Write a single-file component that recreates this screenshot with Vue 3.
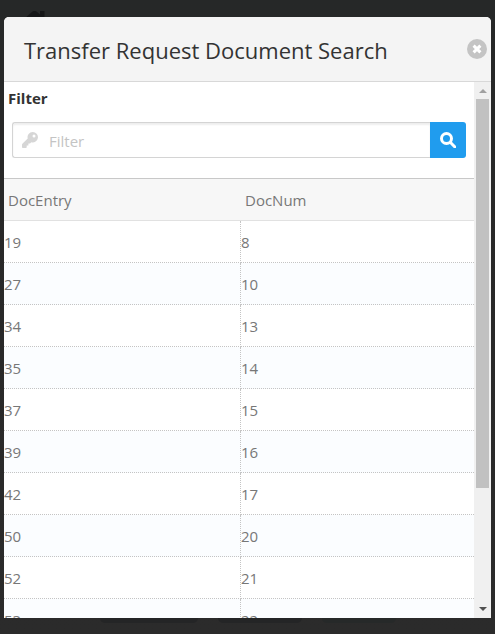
<script setup>
import { ref } from 'vue'

const filter = ref('')
const rows = [
  { docEntry: 19, docNum: 8 },
  { docEntry: 27, docNum: 10 },
  { docEntry: 34, docNum: 13 },
  { docEntry: 35, docNum: 14 },
  { docEntry: 37, docNum: 15 },
  { docEntry: 39, docNum: 16 },
  { docEntry: 42, docNum: 17 },
  { docEntry: 50, docNum: 20 },
  { docEntry: 52, docNum: 21 },
  { docEntry: 53, docNum: 22 },
]
</script>

<template>
  <div class="page">
    <svg class="home" viewBox="0 0 24 18" aria-hidden="true">
      <path d="M0 8 L8.500 0.600 Q10.500 -0.800 12.500 0.600 L16 3.500 V0 H20.500 V7 L24 11 H20 V18 H4 V8 Z" />
    </svg>
    <div class="footer-shapes" aria-hidden="true"><i></i><i></i><i></i></div>
    <section class="dialog" role="dialog" aria-labelledby="dialog-title">
      <header class="head">
        <h1 id="dialog-title">Transfer Request Document Search</h1>
        <button class="close" type="button" aria-label="Close">
          <svg viewBox="0 0 20 20"><path d="M6.600 6.600 L13.400 13.400 M13.400 6.600 L6.600 13.400" /></svg>
        </button>
      </header>
      <div class="body">
        <div class="content">
          <form class="filter" @submit.prevent>
            <label for="filter">Filter</label>
            <div class="group">
              <div class="field">
                <svg class="key" viewBox="0 0 16 16" aria-hidden="true">
                  <path fill-rule="evenodd" d="M10.700 0 A5.200 5.200 0 1 1 9.300 10.200 L8 11.600 H6.400 V13.400 H4.700 V15.200 Q4.700 16 3.900 16 H0.800 Q0 16 0 15.200 V12.600 Q0 12.100 0.400 11.700 L5.700 6.500 A5.200 5.200 0 0 1 10.700 0 Z M12 2.500 A1.500 1.500 0 1 0 12 5.500 A1.500 1.500 0 1 0 12 2.500 Z" />
                </svg>
                <input id="filter" v-model="filter" type="text" placeholder="Filter" />
              </div>
              <button class="search" type="submit" aria-label="Search">
                <svg viewBox="0 0 16 16"><circle cx="6.500" cy="6.500" r="5" /><path d="M10.500 10.500 L15 15" /></svg>
              </button>
            </div>
          </form>
          <table>
            <thead>
              <tr><th scope="col">DocEntry</th><th scope="col">DocNum</th></tr>
            </thead>
            <tbody>
              <tr v-for="row in rows" :key="row.docEntry">
                <td>{{ row.docEntry }}</td>
                <td>{{ row.docNum }}</td>
              </tr>
            </tbody>
          </table>
        </div>
        <div class="scrollbar" aria-hidden="true">
          <svg class="arrow up" viewBox="0 0 17 17"><path d="M5 11 L9 7 L13 11 Z" /></svg>
          <div class="track"><div class="thumb"></div></div>
          <svg class="arrow down" viewBox="0 0 17 17"><path d="M5 6 L9 10 L13 6 Z" /></svg>
        </div>
      </div>
    </section>
  </div>
</template>

<style>
body {
  background: #27292a;
}
</style>

<style scoped>
* {
  box-sizing: border-box;
}
.page {
  position: relative;
  display: flex;
  height: 100vh;
  padding: 17px 4px 16px;
  overflow: hidden;
  background: linear-gradient(#262828, #282828 30%, #2b2b2b);
  font-family: "Segoe UI", "Open Sans", "Noto Sans", sans-serif;
  font-size: 15px;
  color: #777;
}
.home {
  position: absolute;
  top: 11px;
  left: 24px;
  width: 24px;
  height: 18px;
  fill: #151617;
}
.footer-shapes {
  position: absolute;
  bottom: 11px;
  left: 100px;
  display: flex;
  gap: 20px;
}
.footer-shapes i {
  width: 98px;
  height: 6px;
  border-radius: 0 0 5px 5px;
  background: #242526;
}
.footer-shapes i:nth-child(2) {
  width: 84px;
}
.footer-shapes i:nth-child(3) {
  width: 74px;
  background: #262929;
}
.dialog {
  position: relative;
  display: flex;
  flex: 1;
  flex-direction: column;
  min-width: 0;
  overflow: hidden;
  border-radius: 5px 5px 0 0;
  background: #fff;
}
.head {
  display: flex;
  flex: none;
  align-items: center;
  justify-content: space-between;
  height: 65px;
  padding: 0 4px 0 20px;
  border-bottom: 1px solid #d8d8d8;
  background: #f4f4f4;
}
h1 {
  margin: 0;
  padding-top: 2px;
  color: #333;
  font-size: 22px;
  font-weight: 400;
  line-height: 32px;
  white-space: nowrap;
}
.close {
  display: flex;
  width: 20px;
  height: 20px;
  padding: 0;
  border: 0;
  border-radius: 50%;
  background: #c4c4c4;
}
.close svg {
  width: 20px;
  height: 20px;
  fill: none;
  stroke: #fff;
  stroke-width: 3;
}
.body {
  display: flex;
  flex: 1;
  min-height: 0;
}
.content {
  flex: 1;
  min-width: 0;
  overflow: hidden;
}
.filter {
  padding: 5px 8px 20px;
}
label {
  display: block;
  margin: 0 0 13px -4px;
  color: #333;
  font-weight: 700;
  line-height: 22px;
}
.group {
  display: flex;
  height: 36px;
}
.field {
  display: flex;
  flex: 1;
  align-items: center;
  gap: 11px;
  min-width: 0;
  padding-left: 9px;
  border: 1px solid #d4d4d4;
  border-right: 0;
  border-radius: 3px 0 0 3px;
  box-shadow: inset 0 2px 2px #eee;
}
.key {
  flex: none;
  width: 16px;
  height: 16px;
  fill: #d6d6d6;
}
input {
  flex: 1;
  min-width: 0;
  height: 34px;
  padding: 1px 0 0;
  border: 0;
  outline: 0;
  background: transparent;
  color: #555;
  font: inherit;
}
input::placeholder {
  color: #c4c4c4;
  opacity: 1;
}
.search {
  display: flex;
  flex: none;
  align-items: center;
  justify-content: center;
  width: 36px;
  padding: 0;
  border: 0;
  border-radius: 0 3px 3px 0;
  background: #209cee;
}
.search svg {
  width: 16px;
  height: 16px;
  fill: none;
  stroke: #fff;
  stroke-width: 3;
  stroke-linecap: round;
}
table {
  width: 100%;
  border-collapse: separate;
  border-spacing: 0;
  table-layout: fixed;
}
th,
td {
  height: 42px;
  padding: 0;
  text-align: left;
  font-weight: 400;
  line-height: 22px;
}
th {
  height: 43px;
  padding: 0 4px;
  border-top: 1px solid #c8c8c8;
  border-bottom: 1px solid #e1e1e1;
  background: #f7f7f7;
}
th:last-child {
  width: 233px;
}
td {
  border-bottom: 1px dotted #c4c4c4;
}
td:first-child {
  border-right: 1px dotted #c4c4c4;
}
tbody tr:nth-child(even) {
  background: #fbfdff;
}
.scrollbar {
  display: flex;
  flex: none;
  flex-direction: column;
  width: 17px;
  background: #f0f0f0;
}
.arrow {
  flex: none;
  width: 17px;
  height: 17px;
}
.up {
  fill: #a0a0a0;
}
.down {
  fill: #505050;
}
.track {
  flex: 1;
  padding: 0 2px;
}
.thumb {
  height: 77.5%;
  background: #c1c1c1;
}
</style>
